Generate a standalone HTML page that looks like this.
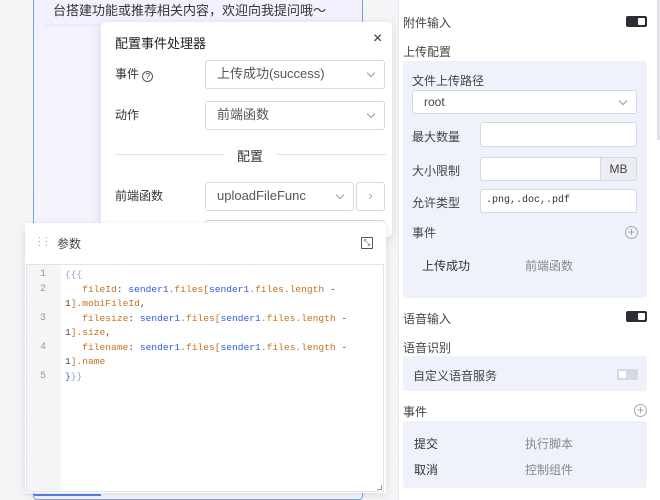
<!DOCTYPE html>
<html><head><meta charset="utf-8"><style>
*{box-sizing:border-box;margin:0;padding:0}
body{width:660px;height:500px;overflow:hidden;position:relative;background:#f3f4f6;font-family:"Liberation Sans","Noto Sans CJK SC",sans-serif;font-size:12px;color:#333}
.abs{position:absolute}
.canvas{left:0;top:0;width:398px;height:500px;background-color:#f4f5f7;background-image:radial-gradient(#e6e7eb 0.6px,transparent 0.8px);background-size:10px 10px}
.card{left:33px;top:-4px;width:330px;height:504px;background:linear-gradient(180deg,#f3f1fd,#f6f7fc);border:1.5px solid #7f9cf5;border-radius:4px}
.dlg{left:101px;top:22px;width:291px;height:215px;background:#fff;box-shadow:0 2px 10px rgba(0,0,0,.12);border-radius:4px}
.sel{position:absolute;border:1px solid #d5d9e2;border-radius:3px;background:#fff;font-size:13px;color:#555;padding-left:11px;line-height:26px}
.arr{position:absolute;right:10px;top:9px;width:6px;height:6px;border-right:1px solid #999;border-bottom:1px solid #999;transform:rotate(45deg)}
.lbl{position:absolute;font-size:12px;color:#333}
.params{left:25px;top:223px;width:361px;height:270px;background:#fff;box-shadow:0 2px 8px rgba(0,0,0,.1)}
.editor{left:26px;top:264px;width:358px;height:228px;background:#fff;border:1px solid #dfe3ec}
.gut{left:27px;top:265px;width:34px;height:226px;background:#f5f5f7}
.code{font-family:"Liberation Mono",monospace;font-size:9.6px;line-height:14.5px;white-space:pre}
.ln{color:#999;left:40px;top:268px;text-align:right;font-size:10px}
.c{left:65px;top:268px;color:#c5711e}
.b{color:#2b5ce0}.g{color:#9aa3d6}.d{color:#444}
.right{left:398px;top:0;width:262px;height:500px;background:#fff;border-left:1px solid #e8e9ee}
.rl{position:absolute;font-size:12px;color:#444}
.box{position:absolute;background:#eff2fb;border-radius:3px}
.inp{position:absolute;background:#fff;border:1px solid #d5d9e2;border-radius:3px}
.tg{position:absolute;width:21px;height:11px;border-radius:2px;background:#2a2d36}
.tg:after{content:"";position:absolute;right:2px;top:2px;width:7px;height:7px;background:#fff;border-radius:1px}
.tgoff{position:absolute;width:21px;height:11px;border-radius:2px;background:#d4d8e2}
.tgoff:after{content:"";position:absolute;left:2px;top:2px;width:7px;height:7px;background:#fff;border-radius:1px}
.plus{position:absolute;width:13px;height:13px;border:1px solid #aaa;border-radius:50%;font-size:12px;line-height:11px;text-align:center;color:#999}
</style></head><body>
<div class="abs canvas"></div>
<div class="abs card"></div>
<div class="abs" style="left:53px;top:0px;font-size:13px;color:#333">台搭建功能或推荐相关内容，欢迎向我提问哦～</div>
<div class="abs" style="left:44px;top:24px;width:310px;height:2px;background:#eceaf7"></div>
<div class="abs" style="left:34px;top:494px;width:67px;height:2px;background:#5a7ff0"></div>

<div class="abs dlg">
<div class="lbl" style="left:14px;top:11px;font-size:13px;color:#222">配置事件处理器</div>
<div class="lbl" style="left:272px;top:8px;font-size:16px;color:#333">×</div>
<div class="lbl" style="left:14px;top:43px">事件 <span style="display:inline-block;width:11px;height:11px;border:1px solid #555;border-radius:50%;font-size:8px;line-height:9px;text-align:center;vertical-align:-1px">?</span></div>
<div class="sel" style="left:104px;top:38px;width:180px;height:29px">上传成功(success)<i class="arr"></i></div>
<div class="lbl" style="left:14px;top:84px">动作</div>
<div class="sel" style="left:104px;top:79px;width:180px;height:29px">前端函数<i class="arr"></i></div>
<div class="abs" style="left:14px;top:132px;width:110px;height:1px;background:#e2e4ea"></div>
<div class="abs" style="left:175px;top:132px;width:110px;height:1px;background:#e2e4ea"></div>
<div class="lbl" style="left:136px;top:124px;font-size:13px">配置</div>
<div class="lbl" style="left:14px;top:165px">前端函数</div>
<div class="sel" style="left:104px;top:160px;width:149px;height:29px">uploadFileFunc<i class="arr"></i></div>
<div class="sel" style="left:255px;top:160px;width:29px;height:29px;padding:0;text-align:center;color:#aaa">›</div>
<div class="sel" style="left:104px;top:198px;width:180px;height:20px"></div>
</div>

<div class="abs params"></div>
<div class="abs" style="left:38px;top:237px;font-size:9px;line-height:4px;color:#888;letter-spacing:1px">: :<br>: :</div>
<div class="abs" style="left:57px;top:235px;font-size:12px;color:#444">参数</div>
<div class="abs" style="left:361px;top:237px;width:12px;height:12px;border:1px solid #555;border-radius:1px;font-size:8px;line-height:10px;text-align:center;color:#333">⤡</div>
<div class="abs editor"></div>
<div class="abs gut"></div>
<div class="abs code ln">1
2

3

4

5</div>
<div class="abs code c"><span class="g">{{{</span>
   fileId<span class="d">:</span> <span class="b">sender1</span>.files[<span class="b">sender1</span>.files.length <span class="d">-</span>
<span class="d">1</span>].mobiFileId<span class="d">,</span>
   filesize<span class="d">:</span> <span class="b">sender1</span>.files[<span class="b">sender1</span>.files.length <span class="d">-</span>
<span class="d">1</span>].size<span class="d">,</span>
   filename<span class="d">:</span> <span class="b">sender1</span>.files[<span class="b">sender1</span>.files.length <span class="d">-</span>
<span class="d">1</span>].name
<span class="b">}</span><span class="g">}}</span></div>
<div class="abs" style="left:377px;top:485px;width:5px;height:5px;border-right:1px solid #999;border-bottom:1px solid #999"></div>

<div class="abs right"></div>
<div class="rl" style="left:403px;top:14px">附件输入</div>
<div class="tg" style="left:626px;top:16px"></div>
<div class="rl" style="left:403px;top:43px">上传配置</div>
<div class="box" style="left:403px;top:61px;width:244px;height:237px"></div>
<div class="rl" style="left:412px;top:72px">文件上传路径</div>
<div class="inp" style="left:412px;top:90px;width:225px;height:24px;font-size:12px;line-height:22px;padding-left:11px;color:#444">root<i class="arr" style="top:7px"></i></div>
<div class="rl" style="left:412px;top:128px">最大数量</div>
<div class="inp" style="left:480px;top:122px;width:157px;height:25px"></div>
<div class="rl" style="left:412px;top:162px">大小限制</div>
<div class="inp" style="left:480px;top:157px;width:157px;height:24px"></div>
<div class="abs" style="left:600px;top:157px;width:37px;height:24px;background:#eceef3;border:1px solid #d5d9e2;border-radius:0 3px 3px 0;text-align:center;line-height:22px;font-size:12px;color:#444">MB</div>
<div class="rl" style="left:412px;top:194px">允许类型</div>
<div class="inp" style="left:480px;top:189px;width:157px;height:24px;font-family:'Liberation Mono',monospace;font-size:10px;line-height:22px;padding-left:5px;color:#333">.png,.doc,.pdf</div>
<div class="rl" style="left:412px;top:224px">事件</div>
<div class="plus" style="left:625px;top:226px">+</div>
<div class="rl" style="left:422px;top:257px;color:#333">上传成功</div>
<div class="rl" style="left:525px;top:257px;color:#888">前端函数</div>

<div class="rl" style="left:403px;top:310px">语音输入</div>
<div class="tg" style="left:626px;top:311px"></div>
<div class="rl" style="left:403px;top:339px">语音识别</div>
<div class="box" style="left:403px;top:356px;width:244px;height:35px"></div>
<div class="rl" style="left:413px;top:367px">自定义语音服务</div>
<div class="tgoff" style="left:617px;top:369px"></div>
<div class="rl" style="left:403px;top:403px">事件</div>
<div class="plus" style="left:634px;top:404px">+</div>
<div class="box" style="left:403px;top:421px;width:244px;height:67px"></div>
<div class="rl" style="left:414px;top:435px;color:#333">提交</div>
<div class="rl" style="left:525px;top:435px;color:#888">执行脚本</div>
<div class="rl" style="left:414px;top:461px;color:#333">取消</div>
<div class="rl" style="left:525px;top:461px;color:#888">控制组件</div>
<div class="abs" style="left:657px;top:0;width:3px;height:140px;background:#e0e2e8"></div>
</body></html>
